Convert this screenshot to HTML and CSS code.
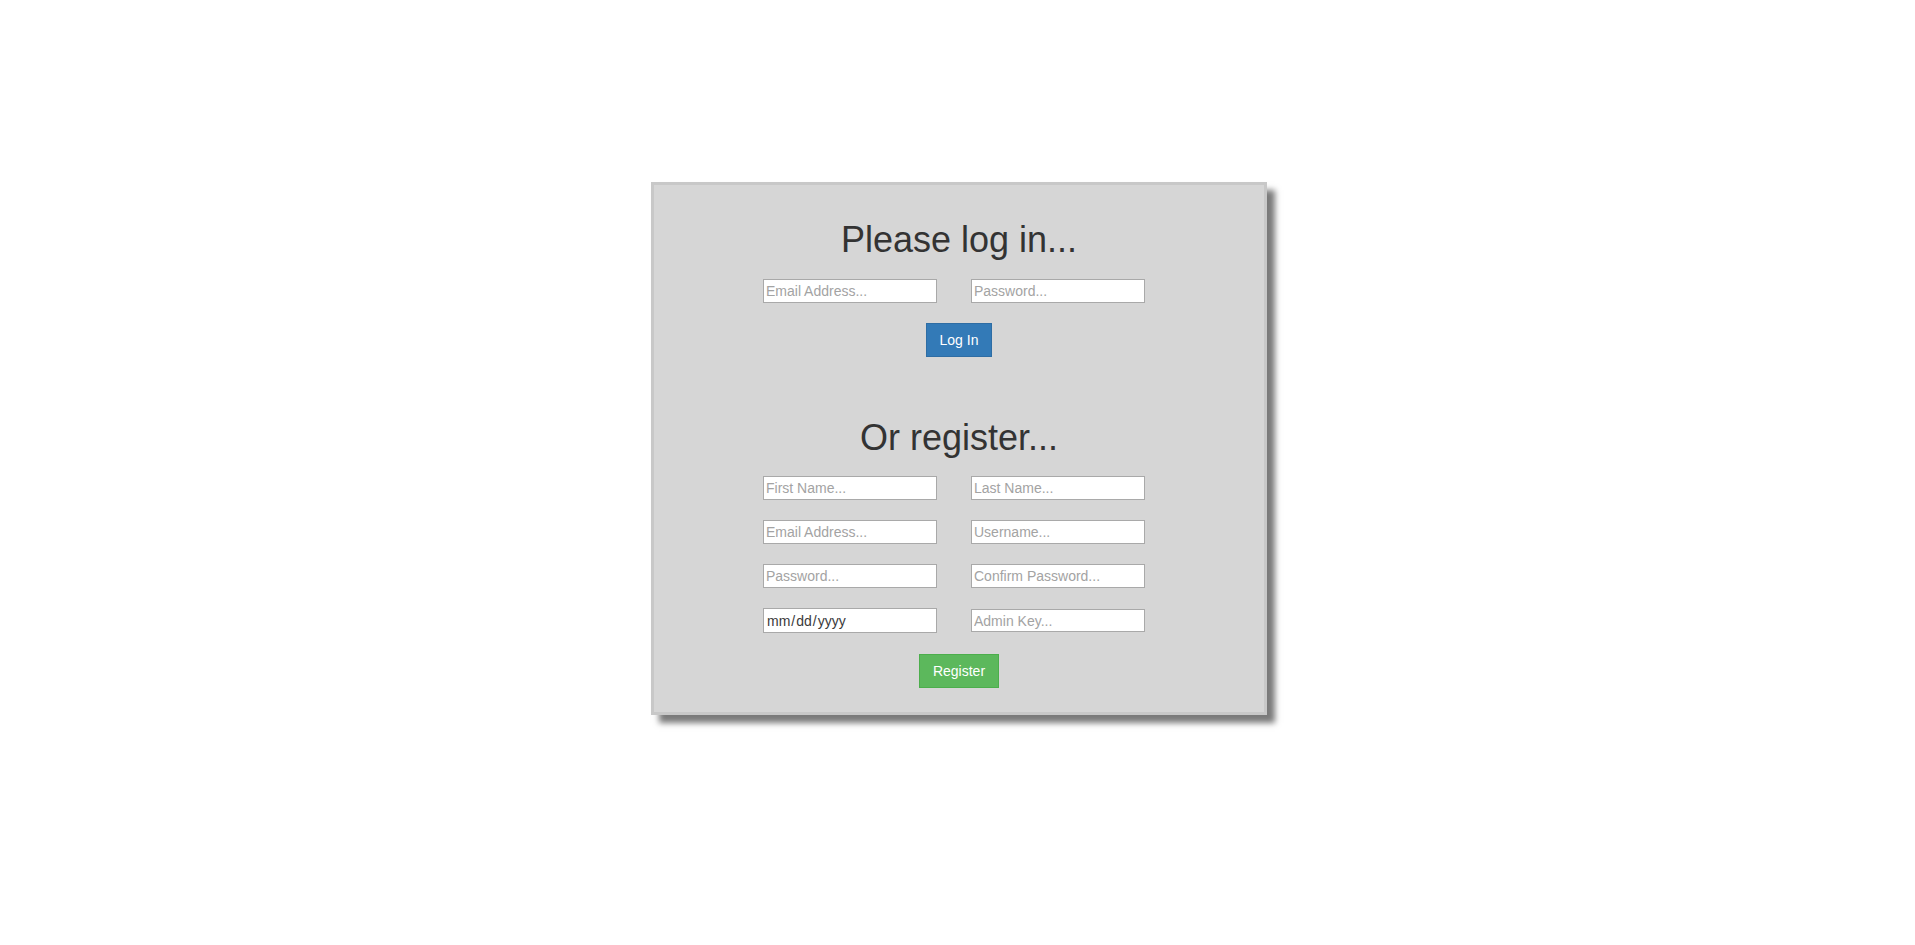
FILE: index.html
```html
<!DOCTYPE html>
<html lang="en">
<head>
<meta charset="utf-8">
<title>Login</title>
<link rel="stylesheet" href="styles.css">
</head>
<body>
<div class="page">
  <div class="panel">
    <form class="section login">
      <h1 class="title">Please log in...</h1>
      <div class="row">
        <input class="field" type="email" placeholder="Email Address...">
        <input class="field" type="password" placeholder="Password...">
      </div>
      <div class="actions">
        <button class="btn btn-primary" type="button">Log In</button>
      </div>
    </form>
    <form class="section register">
      <h1 class="title">Or register...</h1>
      <div class="row">
        <input class="field" type="text" placeholder="First Name...">
        <input class="field" type="text" placeholder="Last Name...">
      </div>
      <div class="row">
        <input class="field" type="email" placeholder="Email Address...">
        <input class="field" type="text" placeholder="Username...">
      </div>
      <div class="row">
        <input class="field" type="password" placeholder="Password...">
        <input class="field" type="password" placeholder="Confirm Password...">
      </div>
      <div class="row row-date">
        <input class="field field-date" type="date">
        <input class="field field-key" type="text" placeholder="Admin Key...">
      </div>
      <div class="actions actions-register">
        <button class="btn btn-success" type="button">Register</button>
      </div>
    </form>
  </div>
</div>
</body>
</html>
```

FILE: styles.css
```css
* {
  box-sizing: border-box;
}

html, body {
  margin: 0;
  padding: 0;
  background: #ffffff;
}

body {
  font-family: "Liberation Sans", Arial, Helvetica, sans-serif;
  font-size: 14px;
  line-height: 20px;
  color: #333333;
  min-height: 945px;
}

.page {
  display: flex;
  justify-content: center;
  align-items: flex-start;
  padding-top: 182px;
  padding-bottom: 60px;
  padding-left: 3px;
}

.panel {
  width: 616px;
  background: #d6d6d6;
  border: 3px solid #c8c8c8;
  box-shadow: 8px 8px 6px #7a7a7a;
  padding-top: 35px;
  padding-bottom: 24px;
}

.section {
  display: flex;
  flex-direction: column;
  align-items: center;
  margin: 0;
}

.register {
  margin-top: 61px;
}

.title {
  margin: 0;
  font-size: 36px;
  line-height: 39.6px;
  font-weight: 500;
  color: #333333;
  text-align: center;
}

.row {
  display: flex;
  gap: 34px;
  margin-top: 20px;
  margin-right: 10px;
}

.title + .row {
  margin-top: 19px;
}

.field {
  width: 174px;
  height: 24px;
  margin: 0;
  padding: 0 2px;
  border: 1px solid #a9a9a9;
  border-radius: 0;
  background: #ffffff;
  font-family: "Liberation Sans", Arial, sans-serif;
  font-size: 14px;
  color: #333333;
  outline: none;
}

.field::placeholder {
  color: #a3a3a3;
  opacity: 1;
}

.row-date {
  align-items: center;
}

.field-date {
  height: 25px;
  color: #3a3a3a;
}

.field-key {
  height: 23px;
}

.field-date::-webkit-calendar-picker-indicator {
  display: none;
}

.field-date::-webkit-datetime-edit {
  padding: 0;
}

.actions {
  display: flex;
  justify-content: center;
  margin-top: 20px;
}

.actions-register {
  margin-top: 21px;
}

.btn {
  font-family: "Liberation Sans", Arial, sans-serif;
  font-size: 14px;
  line-height: 20px;
  padding: 6px 13px;
  border: 1px solid transparent;
  border-radius: 0;
  color: #ffffff;
  cursor: pointer;
}

.btn-primary {
  background: #337ab7;
  border-color: #2e6da4;
}

.btn-success {
  background: #5cb85c;
  border-color: #4cae4c;
}
```
